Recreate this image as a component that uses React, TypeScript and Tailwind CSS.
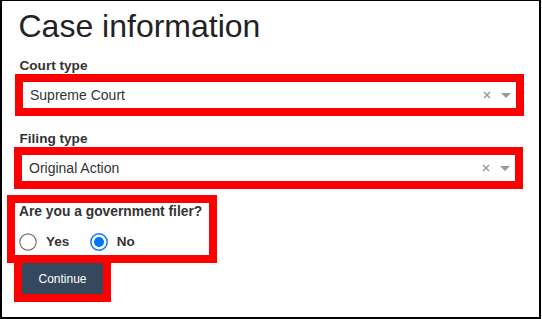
import React from "react";

function SelectBox({ value, ml }: { value: string; ml: string }) {
  return (
    <div className={`${ml} w-[509px] h-[42px] border-8 border-[#ff0000] bg-white flex items-center`}>
      <div className="flex-1 pl-[7px] text-[14px] leading-[26px] text-[#333333]">{value}</div>
      <svg width="8" height="8" viewBox="0 0 8 8" className="mr-[10px]">
        <path d="M1 1 L7 7 M7 1 L1 7" stroke="#9a9a9a" strokeWidth="1.5" />
      </svg>
      <svg width="10" height="5" viewBox="0 0 10 5" className="mr-[5px]">
        <path d="M0 0 L10 0 L5 5 Z" fill="#999999" />
      </svg>
    </div>
  );
}

function Radio({ checked }: { checked: boolean }) {
  return (
    <svg width="18" height="18" viewBox="0 0 18 18">
      {checked ? (
        <>
          <circle cx="9" cy="9" r="8.2" fill="white" stroke="#0075ff" strokeWidth="1.4" />
          <circle cx="9" cy="9" r="5" fill="#0075ff" />
        </>
      ) : (
        <circle cx="9" cy="9" r="8.2" fill="white" stroke="#767676" strokeWidth="1.2" />
      )}
    </svg>
  );
}

export default function App() {
  return (
    <div
      className="w-[541px] h-[319px] bg-white border-l-2 border-r-2 border-b-2 border-t border-black flex flex-col"
      style={{ fontFamily: '"Liberation Sans", Arial, sans-serif' }}
    >
      <h1 className="mt-[7px] ml-[16.5px] text-[32px] leading-[36px] text-[#222222] font-normal">
        Case information
      </h1>
      <div className="mt-[14px] ml-[17.5px] text-[13.6px] leading-[16px] font-bold text-[#333333]">Court type</div>
      <SelectBox value="Supreme Court" ml="ml-[13px]" />
      <div className="mt-[15px] ml-[17.5px] text-[13.6px] leading-[16px] font-bold text-[#333333]">Filing type</div>
      <SelectBox value="Original Action" ml="ml-[12px]" />
      <div className="mt-[6px] ml-[5px] w-[210px] border-8 border-[#ff0000] bg-white flex flex-col">
        <div className="mt-[1px] pl-[4px] text-[13.8px] leading-[16px] font-bold text-[#333333]">
          Are you a government filer?
        </div>
        <div className="mt-[13px] mb-[4px] h-[18px] pl-[4px] flex items-center">
          <Radio checked={false} />
          <span className="ml-[9px] text-[13.5px] font-bold text-[#333333]">Yes</span>
          <span className="ml-[21px] flex">
            <Radio checked={true} />
          </span>
          <span className="ml-[8.5px] text-[13.5px] font-bold text-[#333333]">No</span>
        </div>
      </div>
      <div className="ml-[12px] w-[97px] border-x-8 border-b-8 border-t-0 border-[#ff0000]">
        <button className="w-full h-[31px] bg-[#35495e] text-white text-[12px] flex items-center justify-center">
          Continue
        </button>
      </div>
    </div>
  );
}
